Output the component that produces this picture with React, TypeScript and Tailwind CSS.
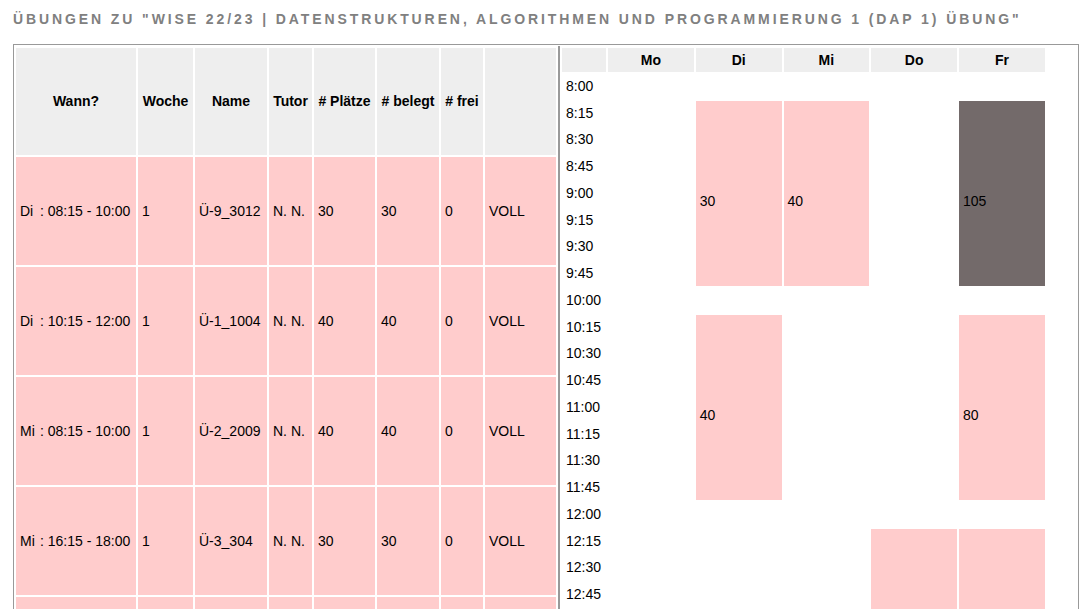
const rows = [
  { day: 'Di', time: '08:15 - 10:00', week: '1', name: 'Ü-9_3012', tutor: 'N. N.', places: '30', taken: '30', free: '0', status: 'VOLL' },
  { day: 'Di', time: '10:15 - 12:00', week: '1', name: 'Ü-1_1004', tutor: 'N. N.', places: '40', taken: '40', free: '0', status: 'VOLL' },
  { day: 'Mi', time: '08:15 - 10:00', week: '1', name: 'Ü-2_2009', tutor: 'N. N.', places: '40', taken: '40', free: '0', status: 'VOLL' },
  { day: 'Mi', time: '16:15 - 18:00', week: '1', name: 'Ü-3_304', tutor: 'N. N.', places: '30', taken: '30', free: '0', status: 'VOLL' },
  { day: 'Do', time: '12:15 - 14:00', week: '1', name: 'Ü-4_1003', tutor: 'N. N.', places: '30', taken: '30', free: '0', status: 'VOLL' },
  { day: 'Fr', time: '08:15 - 10:00', week: '1', name: 'Ü-5_3012', tutor: 'N. N.', places: '35', taken: '35', free: '0', status: 'VOLL' },
];

const headers = [
  { label: 'Wann?', w: 'w-[120px]' },
  { label: 'Woche', w: 'w-[55px]' },
  { label: 'Name', w: 'w-[72px]' },
  { label: 'Tutor', w: 'w-[43px]' },
  { label: '# Plätze', w: 'w-[61px]' },
  { label: '# belegt', w: 'w-[62px]' },
  { label: '# frei', w: 'w-[42px]' },
  { label: '', w: 'w-[71px]' },
];

const times: string[] = [];
for (let h = 8; h <= 18; h++) {
  for (const m of ['00', '15', '30', '45']) {
    if (h === 18 && m !== '00') break;
    times.push(`${h}:${m}`);
  }
}

type Block = { cls: string; n: string; dark?: boolean };

const days: { name: string; blocks: Block[] }[] = [
  { name: 'Mo', blocks: [] },
  {
    name: 'Di',
    blocks: [
      { cls: 'row-start-3 row-end-10', n: '30' },
      { cls: 'row-start-11 row-end-18', n: '40' },
    ],
  },
  {
    name: 'Mi',
    blocks: [
      { cls: 'row-start-3 row-end-10', n: '40' },
      { cls: 'row-start-35 row-end-42', n: '30' },
    ],
  },
  { name: 'Do', blocks: [{ cls: 'row-start-19 row-end-26', n: '30' }] },
  {
    name: 'Fr',
    blocks: [
      { cls: 'row-start-3 row-end-10', n: '105', dark: true },
      { cls: 'row-start-11 row-end-18', n: '80' },
      { cls: 'row-start-19 row-end-26', n: '40' },
    ],
  },
];

export default function App() {
  return (
    <div className="min-h-screen bg-white pb-8 font-['Liberation_Sans',Arial,sans-serif] text-[14px] text-black">
      <h1 className="pl-[13px] pt-[11px] text-[14px] leading-4 font-bold uppercase tracking-[2.9px] text-[#808080]">
        Übungen zu "WiSe 22/23 | Datenstrukturen, Algorithmen und Programmierung 1 (DAP 1) Übung"
      </h1>

      <div className="ml-[13px] mt-[17px] flex w-[1066px] items-start border border-[#999] pt-px">
        {/* Gruppenliste */}
        <table className="w-[544px] table-fixed border-separate border-spacing-[2px]">
          <thead>
            <tr>
              {headers.map((h, i) => (
                <th key={i} className={`${h.w} h-[107px] bg-[#eeeeee] text-center align-middle font-bold`}>
                  {h.label}
                </th>
              ))}
            </tr>
          </thead>
          <tbody>
            {rows.map((r, i) => (
              <tr key={i}>
                <td className="h-[108px] bg-[#ffcccc] px-1 align-middle whitespace-nowrap">
                  <span className="inline-block w-[20px]">{r.day}</span>: {r.time}
                </td>
                <td className="bg-[#ffcccc] px-1 align-middle">{r.week}</td>
                <td className="bg-[#ffcccc] px-1 align-middle">{r.name}</td>
                <td className="bg-[#ffcccc] px-1 align-middle whitespace-nowrap">{r.tutor}</td>
                <td className="bg-[#ffcccc] px-1 align-middle">{r.places}</td>
                <td className="bg-[#ffcccc] px-1 align-middle">{r.taken}</td>
                <td className="bg-[#ffcccc] px-1 align-middle">{r.free}</td>
                <td className="bg-[#ffcccc] px-1 align-middle">{r.status}</td>
              </tr>
            ))}
          </tbody>
        </table>

        <div className="w-[2px] self-stretch bg-[#999]" />

        {/* Wochenplan */}
        <div className="flex gap-[2px] p-[2px]">
          <div className="flex w-[44px] flex-col gap-[2px]">
            <div className="h-[24px] bg-[#eeeeee]" />
            {times.map((t) => (
              <div key={t} className="flex h-[24.75px] items-center pl-1">
                {t}
              </div>
            ))}
          </div>
          {days.map((d) => (
            <div key={d.name} className="grid w-[85.75px] grid-rows-[24px_repeat(41,24.75px)] gap-y-[2px]">
              <div className="row-start-1 flex items-center justify-center bg-[#eeeeee] font-bold">{d.name}</div>
              {d.blocks.map((b, i) => (
                <div
                  key={i}
                  className={`${b.cls} flex items-center pl-1 pt-[17px] ${b.dark ? 'bg-[#736a6a]' : 'bg-[#ffcccc]'}`}
                >
                  {b.n}
                </div>
              ))}
            </div>
          ))}
        </div>
      </div>
    </div>
  );
}
